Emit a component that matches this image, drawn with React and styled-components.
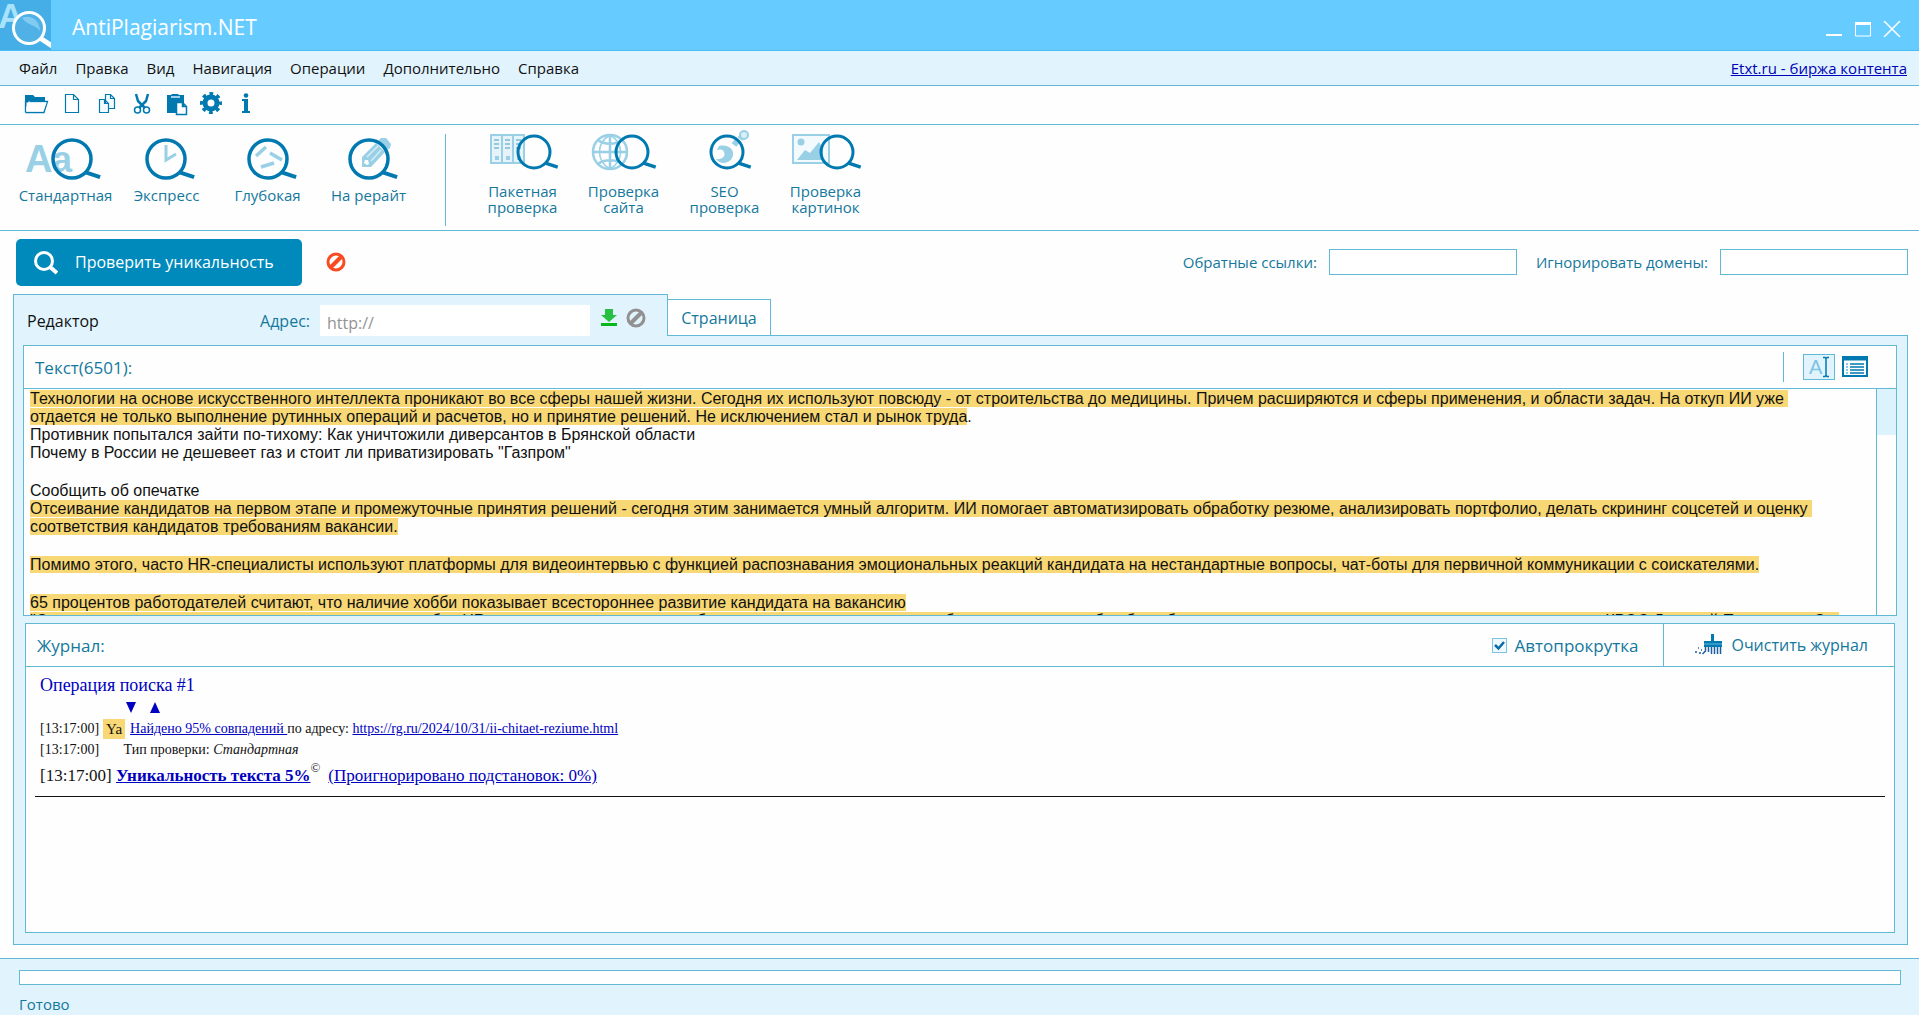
import React, { useState } from 'react';
import styled, { createGlobalStyle } from 'styled-components';

const LINE = '#62b9d6';
const PANEL = '#e1f4fe';
const TEAL = '#14789c';
const DARK = '#0079b0';
const PALE = '#99d0e6';
const UI_FONT = '"Open Sans", "Noto Sans", sans-serif';

const GlobalStyle = createGlobalStyle`
    *, *::before, *::after {
        box-sizing: border-box;
    }
    body {
        margin: 0;
        background: #fefefe;
        font-family: ${UI_FONT};
        font-size: 15px;
        color: #111;
    }
    button, input {
        font-family: inherit;
        font-size: inherit;
    }
    button {
        border: 0;
        padding: 0;
        background: none;
        color: inherit;
        cursor: pointer;
    }
    svg {
        display: block;
        flex: none;
    }
`;

const Window = styled.div`
    display: flex;
    flex-direction: column;
    min-height: 100vh;
`;

const TitleBar = styled.header`
    display: flex;
    align-items: center;
    height: 51px;
    padding-right: 18px;
    background: #66ccff;
    border-bottom: 1px solid #4dbdf6;
    color: #fff;
`;

const AppTitle = styled.h1`
    flex: 1;
    margin: 4px 0 0 21px;
    font-size: 21px;
    font-weight: 400;
    line-height: 28px;
`;

const WindowButtons = styled.div`
    display: flex;
    gap: 11px;
    padding-top: 8px;
`;

const MenuBar = styled.nav`
    display: flex;
    align-items: center;
    height: 35px;
    padding: 0 12px 0 19px;
    background: ${PANEL};
    border-bottom: 1px solid ${LINE};
`;

const MenuItem = styled.button`
    margin-right: 18px;
    line-height: 20px;
`;

const SiteLink = styled.a`
    margin-left: auto;
    color: #0000b8;
    line-height: 20px;
`;

const QuickBar = styled.div`
    display: flex;
    align-items: center;
    height: 39px;
    padding-left: 23px;
    border-bottom: 1px solid ${LINE};
`;

const QuickButton = styled.button`
    width: 35px;
    height: 26px;
`;

const Ribbon = styled.div`
    display: flex;
    height: 106px;
    padding: 0 15px;
    border-bottom: 1px solid ${LINE};
`;

const RibbonGroup = styled.div`
    display: flex;
    padding-top: ${(props) => (props.$tall ? '5px' : '12px')};
`;

const RibbonDivider = styled.div`
    width: 1px;
    margin: 9px 26px 4px;
    background: ${LINE};
`;

const RibbonButton = styled.button`
    display: flex;
    flex-direction: column;
    align-items: center;
    width: 101px;
    color: ${TEAL};
    line-height: 16px;
    white-space: pre-line;
`;

const RibbonLabel = styled.span`
    margin-top: ${(props) => (props.$tall ? '7px' : '4px')};
`;

const CheckBar = styled.div`
    display: flex;
    align-items: center;
    height: 62px;
    padding: 0 11px 0 16px;
    color: ${TEAL};
`;

const CheckButton = styled.button`
    display: flex;
    align-items: center;
    gap: 17px;
    width: 286px;
    height: 47px;
    padding-left: 17px;
    border-radius: 5px;
    background: #008abb;
    color: #fff;
    font-size: 16px;
`;

const StopButton = styled.button`
    margin: 0 auto 0 24px;
`;

const FieldLabel = styled.label`
    margin: 0 12px 0 19px;
`;

const FieldInput = styled.input`
    width: 188px;
    height: 26px;
    border: 1px solid ${LINE};
    background: #fff;
`;

const TabStrip = styled.div`
    display: flex;
    align-items: flex-end;
    height: 42px;
    margin: 0 11px 0 13px;
    position: relative;
`;

const EditorTab = styled.div`
    display: flex;
    align-items: center;
    width: 655px;
    height: 42px;
    margin-bottom: -1px;
    padding: 10px 21px 0 13px;
    border: 1px solid ${LINE};
    border-bottom: 0;
    background: ${PANEL};
    font-size: 16px;
`;

const AddressLabel = styled.label`
    margin-left: auto;
    color: ${TEAL};
`;

const AddressInput = styled.input`
    width: 270px;
    height: 31px;
    margin: 0 10px;
    padding: 5px 7px 0;
    border: 0;
    background: #fff;
    font-size: 16px;

    &::placeholder {
        color: #939393;
    }
`;

const PageTab = styled.button`
    width: 103px;
    height: 37px;
    margin-bottom: -1px;
    border: 1px solid ${LINE};
    border-left: 0;
    background: #fff;
    color: ${TEAL};
    font-size: 16px;
`;

const Panel = styled.main`
    display: flex;
    flex: 1;
    flex-direction: column;
    margin: 0 11px 13px 13px;
    padding: 9px 11px 11px 10px;
    border: 1px solid ${LINE};
    background: ${PANEL};
`;

const Box = styled.section`
    display: flex;
    flex-direction: column;
    flex: ${(props) => (props.$grow ? 1 : 'none')};
    margin: ${(props) => (props.$grow ? '7px 1px 0' : '0 -1px')};
    border: 1px solid ${LINE};
    background: #fefefe;
`;

const BoxHeader = styled.div`
    display: flex;
    align-items: center;
    height: 43px;
    padding-left: 11px;
    border-bottom: 1px solid ${LINE};
    color: ${TEAL};
    font-size: 17px;
`;

const BoxTitle = styled.h2`
    margin: 0 auto 0 0;
    font-size: 17px;
    font-weight: 400;
`;

const ViewButtons = styled.div`
    display: flex;
    align-items: center;
    gap: 7px;
    height: 30px;
    padding: 0 28px 0 19px;
    border-left: 1px solid ${LINE};
`;

const Document = styled.div`
    display: flex;
    height: 226px;
    overflow: hidden;
`;

const DocumentText = styled.div`
    flex: 1;
    min-width: 0;
    padding: 1px 0 0 6px;
    overflow: hidden;
    color: #111;
    font-family: "Liberation Sans", Arial, sans-serif;
    font-size: 16px;
    line-height: 18px;
    white-space: pre;
`;

const TextLine = styled.div`
    height: ${(props) => (props.$blank ? '20px' : '18px')};
`;

const Found = styled.mark`
    background: #f8d775;
    color: inherit;
`;

const ScrollTrack = styled.div`
    width: 20px;
    border-left: 1px solid ${LINE};
`;

const ScrollThumb = styled.div`
    height: 46px;
    background: #dcf2fd;
`;

const AutoScroll = styled.label`
    display: flex;
    align-items: center;
    gap: 8px;
    height: 42px;
    padding-right: 25px;
    border-right: 1px solid ${LINE};
`;

const CheckBox = styled.input`
    appearance: none;
    width: 15px;
    height: 15px;
    margin: 0;
    border: 1px solid #7cc4de;
    background: #eef9ff;

    &:checked {
        background: #eef9ff url("data:image/svg+xml,%3Csvg xmlns='http://www.w3.org/2000/svg' viewBox='0 0 13 13'%3E%3Cpath d='M2 6l3.500 3.500L11 3' fill='none' stroke='%230a6aa8' stroke-width='2.500'/%3E%3C/svg%3E");
    }
`;

const ClearButton = styled.button`
    display: flex;
    align-items: center;
    gap: 9px;
    padding: 0 26px 0 30px;
    font-size: 16px;
`;

const Log = styled.div`
    padding: 5px 9px;
    color: #111;
    font-family: "Liberation Serif", "Times New Roman", serif;
    font-size: 14px;

    a {
        color: #0000c0;
    }
`;

const LogRow = styled.div`
    display: flex;
    align-items: center;
    height: ${(props) => props.$height};
    padding-left: 5px;
    white-space: pre;
    font-size: ${(props) => (props.$large ? '17px' : '14px')};
`;

const LogTitle = styled(LogRow)`
    color: #0000c0;
    font-size: 18px;
`;

const Arrows = styled.div`
    display: flex;
    gap: 12px;
    padding-left: 85px;
`;

const EngineMark = styled.span`
    margin: 0 5px 0 4px;
    padding: 0 3px;
    background: #f8d775;
    line-height: 20px;
    font-size: 15px;
`;

const Copyright = styled.sup`
    align-self: flex-start;
    margin-right: 8px;
    font-size: 13px;
    line-height: 18px;
`;

const LogEnd = styled.hr`
    height: 1px;
    margin: 3px 0 0;
    border: 0;
    background: #111;
`;

const StatusBar = styled.footer`
    height: 57px;
    padding: 11px 18px 0 19px;
    border-top: 1px solid ${LINE};
    background: ${PANEL};
    color: ${TEAL};
`;

const Progress = styled.div`
    height: 15px;
    margin-bottom: 9px;
    border: 1px solid ${LINE};
    background: #fff;
`;

const StatusText = styled.div`
    line-height: 20px;
`;

const Lens = ({ x, y, r, width = 3 }) => (
    <g stroke={DARK} strokeWidth={width} fill="none">
        <circle cx={x} cy={y} r={r} />
        <path d={`M${x + r * 0.72} ${y + r * 0.7} L${x + r * 1.48} ${y + r * 0.95}`} strokeWidth={width + 0.5} />
    </g>
);

const AppLogo = () => (
    <svg width="51" height="50" viewBox="0 0 51 50">
        <rect width="51" height="50" fill="#46aee6" />
        <text x="-2" y="28" fill="#a8e2fb" fontFamily="Liberation Sans" fontWeight="700" fontSize="35">A</text>
        <circle cx="29" cy="28" r="15.5" fill="#4fb1e6" stroke="#fff" strokeWidth="3" />
        <path d="M22 18c7-4 18 1 18 13-5-7-12-5-18-13z" fill="#80cbf0" />
        <path d="M40 38l12 8" stroke="#fff" strokeWidth="5" />
    </svg>
);

const ribbonModes = [
    {
        label: 'Стандартная',
        icon: (
            <>
                <g fill={PALE} fontFamily="Liberation Sans" fontWeight="700" fontSize="38">
                    <text x="10" y="35">A</text>
                    <text x="37" y="35" fontSize="36">a</text>
                </g>
                <Lens x={57} y={22} r={19} width={3.5} />
            </>
        ),
    },
    {
        label: 'Экспресс',
        icon: (
            <>
                <path d="M50 8v15l10-6" stroke={PALE} strokeWidth="3" fill="none" />
                <Lens x={50} y={22} r={19} width={3.5} />
            </>
        ),
    },
    {
        label: 'Глубокая',
        icon: (
            <>
                <path d="M39 19l10-9M53 16l12 7M44 30l13-4" stroke={PALE} strokeWidth="3.5" fill="none" />
                <Lens x={51} y={22} r={19} width={3.5} />
            </>
        ),
    },
    {
        label: 'На рерайт',
        icon: (
            <>
                <path d="M44 20L58 6l9 9-14 15h-9z" fill={PALE} />
                <path d="M60 4l3-3h5l5 6-1 4-4 3z" fill={PALE} />
                <path d="M49 20L60 9M53 24l10-11" stroke="#d3ecf6" strokeWidth="1.5" />
                <path d="M47 23l3 0 1 4-2 1-3-2z" fill="#fff" />
                <Lens x={51} y={22} r={19} width={3.5} />
            </>
        ),
    },
];

const ribbonChecks = [
    {
        label: 'Пакетная\nпроверка',
        icon: (
            <>
                <path d="M19 5h33v28H19zM30 5v28M41 5v28" fill="#e6f4fa" stroke={PALE} strokeWidth="2" />
                <path d="M22 10h5M22 14h5M22 18h5M33 10h5M33 14h5M33 18h5M44 10h5M44 14h5M44 18h5" stroke={DARK} opacity=".7" />
                <path d="M23 26h4v4h-4zM34 26h4v4h-4zM45 26h4v4h-4z" fill={PALE} />
                <Lens x={62} y={22} r={16} />
            </>
        ),
    },
    {
        label: 'Проверка\nсайта',
        icon: (
            <>
                <g fill="none" stroke={PALE} strokeWidth="2.5">
                    <circle cx="37" cy="22" r="17" />
                    <path d="M37 4v36M19 22h36M25 10c6 5 18 5 24 0M25 34c6-5 18-5 24 0" />
                    <path d="M37 5c-14 8-14 26 0 34M37 5c14 8 14 26 0 34" strokeWidth="1.5" />
                </g>
                <Lens x={59} y={22} r={16} />
            </>
        ),
    },
    {
        label: 'SEO\nпроверка',
        icon: (
            <>
                <path d="M45 16c9-2 15 3 14 9-1 8-12 11-17 4 6 1 10-3 8-7-1-3-4-3-7-2z" fill={PALE} />
                <path d="M60 15l4-5M66 9l4-5" stroke={PALE} strokeWidth="6" />
                <circle cx="70" cy="5" r="4" fill="#d9eff8" stroke={PALE} strokeWidth="2" />
                <Lens x={53} y={22} r={16} />
            </>
        ),
    },
    {
        label: 'Проверка\nкартинок',
        icon: (
            <>
                <path d="M18 5h36v28H18z" fill="#f3fafd" stroke={PALE} strokeWidth="2" />
                <circle cx="26" cy="12" r="3.500" fill={PALE} />
                <path d="M22 30l8-10 5 3 9-11 4 7v11z" fill={PALE} />
                <Lens x={62} y={22} r={16} />
            </>
        ),
    },
];

const quickActions = [
    {
        label: 'Открыть',
        icon: (
            <>
                <path d="M2 3h8l2 2h10v4H6L2 18z" fill={DARK} />
                <path d="M2.500 20.500V9M6.500 9.500h18L21 20.500H2.500" stroke={DARK} fill="none" strokeWidth="1.300" />
                <path d="M3.500 10.500h20L20 19.500H3.500z" fill="#fefefe" />
            </>
        ),
    },
    {
        label: 'Новый',
        icon: <path d="M7.500 2.500h8l5 5v13h-13zM15.500 2.500v5h5" stroke={DARK} fill="none" strokeWidth="1.200" />,
    },
    {
        label: 'Копировать',
        icon: (
            <g stroke={DARK} fill="#f4fbff" strokeWidth="1.200">
                <path d="M12.500 2.500h5l4 4v10h-9zM17.500 2.500v4h4" />
                <path d="M6.500 7.500h5l4 4v9h-9zM11.500 7.500v4h4" />
            </g>
        ),
    },
    {
        label: 'Вырезать',
        icon: (
            <g stroke={DARK} fill="none">
                <path d="M8 2l2 7 7 7M20 2l-2 7-7 7" strokeWidth="2.500" />
                <circle cx="9.500" cy="18" r="3" strokeWidth="1.500" />
                <circle cx="18.500" cy="18" r="3" strokeWidth="1.500" />
            </g>
        ),
    },
    {
        label: 'Вставить',
        icon: (
            <>
                <path d="M4 3h4l1-1h6l1 1h5v18H4z" fill={DARK} />
                <path d="M8 5h9" stroke="#d9f1fb" strokeWidth="1.500" />
                <path d="M13.500 10.500h6l4 4v8h-10zM19.500 10.500v4h4" fill="#fff" stroke={DARK} strokeWidth="1.500" />
            </>
        ),
    },
    {
        label: 'Настройки',
        icon: (
            <g stroke={DARK} fill="none">
                <circle cx="13" cy="11" r="6" strokeWidth="5" />
                <circle cx="13" cy="11" r="9" strokeWidth="4" strokeDasharray="3.600 3.470" strokeDashoffset="1.800" />
            </g>
        ),
    },
    {
        label: 'О программе',
        icon: (
            <g fill={DARK}>
                <circle cx="13" cy="3.500" r="2.300" />
                <path d="M9 7h6v12h2v2H9v-2h2V9H9z" />
            </g>
        ),
    },
];

const documentLines = [
    { found: 'Технологии на основе искусственного интеллекта проникают во все сферы нашей жизни. Сегодня их используют повсюду - от строительства до медицины. Причем расширяются и сферы применения, и области задач. На откуп ИИ уже ' },
    { found: 'отдается не только выполнение рутинных операций и расчетов, но и принятие решений. Не исключением стал и рынок труда', plain: '.' },
    { plain: 'Противник попытался зайти по-тихому: Как уничтожили диверсантов в Брянской области' },
    { plain: 'Почему в России не дешевеет газ и стоит ли приватизировать "Газпром"' },
    {},
    { plain: 'Сообщить об опечатке' },
    { found: 'Отсеивание кандидатов на первом этапе и промежуточные принятия решений - сегодня этим занимается умный алгоритм. ИИ помогает автоматизировать обработку резюме, анализировать портфолио, делать скрининг соцсетей и оценку ' },
    { found: 'соответствия кандидатов требованиям вакансии.' },
    {},
    { found: 'Помимо этого, часто HR-специалисты используют платформы для видеоинтервью с функцией распознавания эмоциональных реакций кандидата на нестандартные вопросы, чат-боты для первичной коммуникации с соискателями.' },
    {},
    { found: '65 процентов работодателей считают, что наличие хобби показывает всестороннее развитие кандидата на вакансию' },
    { found: '"Он значительно экономит силы компании, так как любая HR-система на основе таких работает точнее и поможет нам отобрать тех, кто способен быть более полезен, - рассказывает эксперт, партнер агентства КРОС Дмитрий Прохоров. - Он ' },
];

function App() {
    const [autoScroll, setAutoScroll] = useState(true);
    const [address, setAddress] = useState('');

    return (
        <Window>
            <GlobalStyle />
            <TitleBar>
                <AppLogo />
                <AppTitle>AntiPlagiarism.NET</AppTitle>
                <WindowButtons>
                    <button aria-label="Свернуть">
                        <svg width="18" height="16"><path d="M1 14h16" stroke="#fff" strokeWidth="2" /></svg>
                    </button>
                    <button aria-label="Развернуть">
                        <svg width="18" height="16">
                            <path d="M1.500 1v14h15V1" stroke="#fff" fill="none" />
                            <path d="M1 2.500h16" stroke="#fff" strokeWidth="3" />
                        </svg>
                    </button>
                    <button aria-label="Закрыть">
                        <svg width="18" height="16"><path d="M1 0l16 16M17 0L1 16" stroke="#fff" strokeWidth="1.500" /></svg>
                    </button>
                </WindowButtons>
            </TitleBar>

            <MenuBar>
                {['Файл', 'Правка', 'Вид', 'Навигация', 'Операции', 'Дополнительно', 'Справка'].map((item) => (
                    <MenuItem key={item}>{item}</MenuItem>
                ))}
                <SiteLink href="#etxt">Etxt.ru - биржа контента</SiteLink>
            </MenuBar>

            <QuickBar>
                {quickActions.map((action) => (
                    <QuickButton key={action.label} aria-label={action.label}>
                        <svg width="27" height="26" viewBox="0 0 27 26">{action.icon}</svg>
                    </QuickButton>
                ))}
            </QuickBar>

            <Ribbon>
                <RibbonGroup>
                    {ribbonModes.map((mode) => (
                        <RibbonButton key={mode.label}>
                            <svg width="101" height="46">{mode.icon}</svg>
                            <RibbonLabel>{mode.label}</RibbonLabel>
                        </RibbonButton>
                    ))}
                </RibbonGroup>
                <RibbonDivider />
                <RibbonGroup $tall>
                    {ribbonChecks.map((check) => (
                        <RibbonButton key={check.label}>
                            <svg width="101" height="46">{check.icon}</svg>
                            <RibbonLabel $tall>{check.label}</RibbonLabel>
                        </RibbonButton>
                    ))}
                </RibbonGroup>
            </Ribbon>

            <CheckBar>
                <CheckButton>
                    <svg width="25" height="26">
                        <circle cx="11" cy="12" r="8.500" fill="none" stroke="#fff" strokeWidth="3" />
                        <path d="M17 18l7 6" stroke="#fff" strokeWidth="4" />
                    </svg>
                    Проверить уникальность
                </CheckButton>
                <StopButton aria-label="Остановить">
                    <svg width="20" height="20">
                        <circle cx="10" cy="10" r="8" fill="none" stroke="#fa4b20" strokeWidth="3" />
                        <path d="M5 15L15 5" stroke="#fa4b20" strokeWidth="4" />
                    </svg>
                </StopButton>
                <FieldLabel htmlFor="backlinks">Обратные ссылки:</FieldLabel>
                <FieldInput id="backlinks" />
                <FieldLabel htmlFor="domains">Игнорировать домены:</FieldLabel>
                <FieldInput id="domains" />
            </CheckBar>

            <TabStrip>
                <EditorTab>
                    <span>Редактор</span>
                    <AddressLabel htmlFor="address">Адрес:</AddressLabel>
                    <AddressInput
                        id="address"
                        placeholder="http://"
                        value={address}
                        onChange={(event) => setAddress(event.target.value)}
                    />
                    <button aria-label="Загрузить">
                        <svg width="18" height="26">
                            <path d="M5 1h8v6h4l-8 7-8-7h4z" fill="#27c043" />
                            <path d="M1 16.500h16" stroke="#06b81c" strokeWidth="3" />
                        </svg>
                    </button>
                    <button aria-label="Отменить">
                        <svg width="28" height="26">
                            <circle cx="18" cy="10" r="8" fill="none" stroke="#919191" strokeWidth="3" />
                            <path d="M13 15L23 5" stroke="#919191" strokeWidth="4" />
                        </svg>
                    </button>
                </EditorTab>
                <PageTab>Страница</PageTab>
            </TabStrip>

            <Panel>
                <Box>
                    <BoxHeader>
                        <BoxTitle>Текст(6501):</BoxTitle>
                        <ViewButtons>
                            <button aria-label="Режим текста">
                                <svg width="32" height="26">
                                    <rect x=".5" y=".5" width="31" height="25" fill={PANEL} stroke={LINE} />
                                    <text x="6" y="20" fontFamily="Liberation Sans" fontSize="20" fill="#7fc3df">A</text>
                                    <path d="M20 3.500h2l1 1 1-1h2M20 22.500h2l1-1 1 1h2M23 4v18" stroke={DARK} fill="none" strokeWidth="1.500" />
                                </svg>
                            </button>
                            <button aria-label="Режим списка">
                                <svg width="26" height="22">
                                    <rect x="1" y="1" width="24" height="19" fill="#fff" stroke={DARK} strokeWidth="2" />
                                    <path d="M1 2.500h24" stroke={DARK} strokeWidth="4" />
                                    <path d="M8 8h14M8 11h14M8 14h14M8 17h14" stroke={DARK} strokeWidth="1.300" />
                                    <path d="M4 8h2M4 11h2M4 14h2M4 17h2" stroke={LINE} strokeWidth="1.300" />
                                </svg>
                            </button>
                        </ViewButtons>
                    </BoxHeader>
                    <Document>
                        <DocumentText>
                            {documentLines.map((line, index) => (
                                <TextLine key={index} $blank={!line.found && !line.plain}>
                                    {line.found && <Found>{line.found}</Found>}
                                    {line.plain}
                                </TextLine>
                            ))}
                        </DocumentText>
                        <ScrollTrack>
                            <ScrollThumb />
                        </ScrollTrack>
                    </Document>
                </Box>

                <Box $grow>
                    <BoxHeader>
                        <BoxTitle>Журнал:</BoxTitle>
                        <AutoScroll>
                            <CheckBox
                                type="checkbox"
                                checked={autoScroll}
                                onChange={() => setAutoScroll(!autoScroll)}
                            />
                            Автопрокрутка
                        </AutoScroll>
                        <ClearButton>
                            <svg width="28" height="22">
                                <path d="M17 0h3v7h8v6H10V7h7z" fill={DARK} />
                                <path d="M10 10h18" stroke="#6cb8dc" />
                                <path d="M11.500 13v4l-3 3M14.500 13v5M17.500 13v7M20.500 13v7M23.500 13v7M26.500 13v7" stroke="#1b5d9e" strokeWidth="1.500" fill="none" />
                                <path d="M1 18h2M4 14h1M5 19h2M7 16h1" stroke="#1b5d9e" strokeWidth="1.500" />
                            </svg>
                            Очистить журнал
                        </ClearButton>
                    </BoxHeader>
                    <Log>
                        <LogTitle $height="26px">Операция поиска #1</LogTitle>
                        <LogRow $height="19px">
                            <Arrows>
                                <svg width="12" height="11"><path d="M1 0h10L6 11z" fill="#0000c0" /></svg>
                                <svg width="12" height="11"><path d="M1 11h10L6 0z" fill="#0000c0" /></svg>
                            </Arrows>
                        </LogRow>
                        <LogRow $height="24px">
                            [13:17:00]<EngineMark>Ya</EngineMark>
                            <a href="#match">Найдено 95% совпадений </a>по адресу: <a href="#source">https://rg.ru/2024/10/31/ii-chitaet-reziume.html</a>
                        </LogRow>
                        <LogRow $height="18px">
                            {'[13:17:00]       Тип проверки: '}<em>Стандартная</em>
                        </LogRow>
                        <LogRow $height="34px" $large>
                            {'[13:17:00] '}<a href="#unique"><b>Уникальность текста 5%</b></a>
                            <Copyright>©</Copyright>
                            <a href="#ignored">(Проигнорировано подстановок: 0%)</a>
                        </LogRow>
                        <LogEnd />
                    </Log>
                </Box>
            </Panel>

            <StatusBar>
                <Progress role="progressbar" aria-label="Ход проверки" />
                <StatusText>Готово</StatusText>
            </StatusBar>
        </Window>
    );
}

export default App;
